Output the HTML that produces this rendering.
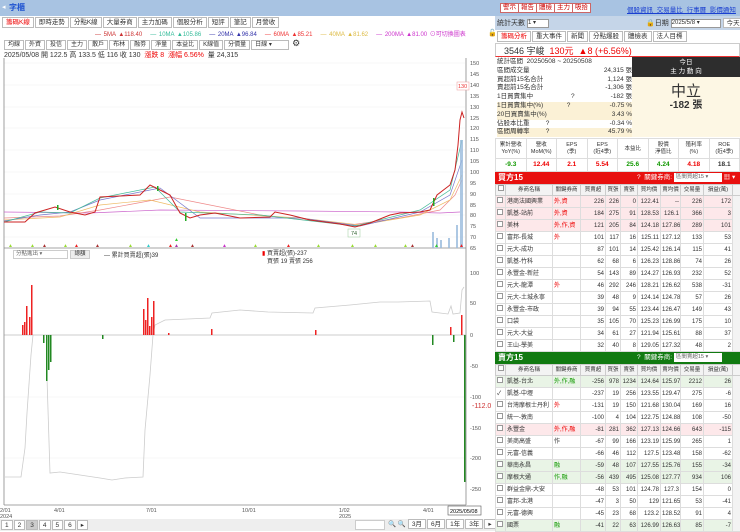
<!DOCTYPE html>
<html><head><meta charset="utf-8">
<style>
*{box-sizing:border-box;margin:0;padding:0}
body{width:740px;height:531px;overflow:hidden;background:#fff;font-family:"Liberation Sans","Noto Sans CJK TC",sans-serif;font-size:7px;color:#333;position:relative}
.abs{position:absolute}
.btn{position:absolute;top:3px;height:10px;border:1px solid #c66;background:#fff;color:#c00;font-size:6.5px;line-height:8px;padding:0 2px}
.tab{display:inline-block;border:1px solid #bbb;height:11px;line-height:9px;padding:0 3px;font-size:6.5px;margin-right:1px;background:#fff}
table{border-collapse:collapse;table-layout:fixed;font-size:6px}
td{border:1px solid #ddd;height:12px;line-height:10px;padding:0 1px;white-space:nowrap;overflow:hidden;text-align:right}
td.l{text-align:left}
th{border:1px solid #ccc;height:11px;line-height:9px;font-weight:normal;background:#f3f3f3;font-size:5.5px;white-space:nowrap;overflow:hidden}
.pk td{background:#fde8ea}
.gn td{background:#e9f4e6}
.r{color:#e00}.g{color:#190}
.cb{display:inline-block;width:6px;height:6px;border:1px solid #999;background:#fff}
</style></head><body>
<div class="abs" style="left:0;top:0;width:740px;height:16px;background:#a8c3e2"></div>
<div class="abs" style="left:2px;top:3px;font-size:7px;color:#fff">◂</div>
<div class="abs" style="left:9px;top:2px;font-size:8px;color:#1a4fd0;font-weight:bold">字櫃</div>
<div class="btn" style="left:500px">警示</div><div class="btn" style="left:518px">報告</div><div class="btn" style="left:536px">體檢</div><div class="btn" style="left:554px">主力</div><div class="btn" style="left:572px">吸拾</div>
<div class="abs" style="left:627px;top:4px;font-size:6.5px;color:#1a3fd0;text-decoration:underline;word-spacing:2px">個股資訊 交易量比 行事曆 影價通知</div>
<div class="abs" style="left:2px;top:17px"><span class="tab" style="color:#e00">籌碼K線</span><span class="tab">即時走勢</span><span class="tab">分點K線</span><span class="tab">大量券商</span><span class="tab">主力加碼</span><span class="tab">個股分析</span><span class="tab">短評</span><span class="tab">筆記</span><span class="tab">月營收</span></div>
<div class="abs" style="left:95px;top:29px;font-size:6px;white-space:nowrap;word-spacing:1px"><span style="color:#c33">— 5MA ▲118.40</span>&nbsp;&nbsp; <span style="color:#3b9">— 10MA ▲105.86</span>&nbsp;&nbsp; <span style="color:#33a">— 20MA ▲96.84</span>&nbsp;&nbsp; <span style="color:#e33">— 60MA ▲85.21</span>&nbsp;&nbsp; <span style="color:#db4">— 40MA ▲81.62</span>&nbsp;&nbsp; <span style="color:#c3c">— 200MA ▲81.00 ⊙可切換圖表</span></div>
<div class="abs" style="left:488px;top:29px;font-size:7px">🔓</div>
<div class="abs" style="left:4px;top:38px;white-space:nowrap"><span class="tab" style="height:10px;font-size:6px;line-height:8px">均線</span><span class="tab" style="height:10px;font-size:6px;line-height:8px">外資</span><span class="tab" style="height:10px;font-size:6px;line-height:8px">投信</span><span class="tab" style="height:10px;font-size:6px;line-height:8px">主力</span><span class="tab" style="height:10px;font-size:6px;line-height:8px">散戶</span><span class="tab" style="height:10px;font-size:6px;line-height:8px">布林</span><span class="tab" style="height:10px;font-size:6px;line-height:8px">融劵</span><span class="tab" style="height:10px;font-size:6px;line-height:8px">淨量</span><span class="tab" style="height:10px;font-size:6px;line-height:8px">本益比</span><span class="tab" style="height:10px;font-size:6px;line-height:8px">K線值</span><span class="tab" style="height:10px;font-size:6px;line-height:8px">分價量</span><span class="tab" style="height:10px;font-size:6px;line-height:8px;width:38px">日線 ▾</span> <span style="font-size:9px">⚙</span></div>
<div class="abs" style="left:4px;top:50px;font-size:7px;white-space:nowrap">2025/05/08 開 122.5 高 133.5 低 116 收 130 &nbsp;<span class="r">漲跌 8 &nbsp;漲幅 6.56%</span> &nbsp;量 24,315</div>
<svg class="abs" style="left:0;top:58px" width="495" height="473" viewBox="0 58 495 473">
<g stroke="#f0f0f0" stroke-width="0.6">
<line x1="4" y1="63" x2="465" y2="63"/><line x1="4" y1="85" x2="465" y2="85"/><line x1="4" y1="107" x2="465" y2="107"/><line x1="4" y1="128" x2="465" y2="128"/><line x1="4" y1="150" x2="465" y2="150"/><line x1="4" y1="172" x2="465" y2="172"/><line x1="4" y1="194" x2="465" y2="194"/><line x1="4" y1="215" x2="465" y2="215"/><line x1="4" y1="237" x2="465" y2="237"/>
<line x1="4" y1="397" x2="465" y2="397"/><line x1="4" y1="458" x2="465" y2="458"/></g>
<line x1="4" y1="58" x2="4" y2="505" stroke="#888" stroke-width="0.8"/>
<line x1="466" y1="58" x2="466" y2="505" stroke="#888" stroke-width="0.8"/>
<line x1="4" y1="248" x2="466" y2="248" stroke="#888" stroke-width="0.8"/>
<line x1="4" y1="505" x2="466" y2="505" stroke="#888" stroke-width="0.8"/>
<g font-size="5.5" fill="#555">
<text x="470" y="65">150</text><text x="470" y="76">145</text><text x="470" y="87">140</text><text x="470" y="98">135</text><text x="470" y="109">130</text><text x="470" y="120">125</text><text x="470" y="130">120</text><text x="470" y="141">115</text><text x="470" y="152">110</text><text x="470" y="163">105</text><text x="470" y="174">100</text><text x="470" y="185">95</text><text x="470" y="196">90</text><text x="470" y="207">85</text><text x="470" y="217">80</text><text x="470" y="228">75</text><text x="470" y="239">70</text><text x="470" y="250">65</text>
<text x="470" y="275">100</text><text x="470" y="305">50</text><text x="470" y="337">0</text><text x="470" y="368">-50</text><text x="470" y="399">-100</text><text x="470" y="430">-150</text><text x="470" y="460">-200</text><text x="470" y="491">-250</text>
</g>
<rect x="457" y="82" width="12" height="8" fill="#fff" stroke="#e99" stroke-width="0.5"/><text x="458" y="88" font-size="5.5" fill="#e33">130</text>
<text x="472" y="408" font-size="7" fill="#c33">-112.0</text>
<polyline fill="none" stroke="#c6c" stroke-width="0.7" points="4,212 90,213 160,210 300,211 400,212 440,213 460,212"/>
<polyline fill="none" stroke="#e88" stroke-width="0.7" points="4,218 60,216 100,210 170,197 260,215 350,225 400,218 440,210 455,195 462,180"/>
<polyline fill="none" stroke="#eb6" stroke-width="0.7" points="4,220 60,217 100,205 150,200 200,212 300,218 360,225 420,215 450,200 462,175"/>
<polyline fill="none" stroke="#77c" stroke-width="0.7" points="4,221 40,215 70,212 100,200 160,188 200,218 300,218 360,226 420,212 450,195 462,160"/>
<polyline fill="none" stroke="#4b9" stroke-width="0.7" points="4,222 40,212 70,213 100,198 155,187 180,212 260,215 355,226 420,210 450,190 462,140"/>
<polyline fill="none" stroke="#c22" stroke-width="1" points="4,222 25,222 35,213 55,207 70,212 85,215 95,212 100,197 120,196 140,195 150,185 160,190 170,195 180,213 190,218 200,215 215,213 240,218 270,217 275,212 290,215 310,220 340,224 355,227 370,223 390,215 400,213 420,212 430,210 437,195 450,185 455,170 458,145 460,120 462,112 464,118"/>
<g fill="#2a2">
<rect x="185" y="213" width="1.5" height="8"/><rect x="57" y="205" width="1.5" height="5"/><rect x="157" y="186" width="1.5" height="5"/><rect x="433" y="198" width="1.5" height="8"/>
</g>
<rect x="348" y="229" width="12" height="8" fill="#fff" stroke="#9c9" stroke-width="0.5"/><text x="351" y="235" font-size="5.5" fill="#363">74</text>
<g fill="#9bd" opacity="0.8"><rect x="432" y="232" width="2" height="16"/><rect x="436" y="238" width="2" height="10"/><rect x="440" y="240" width="2" height="8"/><rect x="448" y="238" width="2" height="10"/><rect x="460" y="140" width="3" height="108"/><rect x="456" y="225" width="2" height="23"/></g>
<g font-size="5"><text x="8" y="247" fill="#9d3">▲</text><text x="30" y="247" fill="#9d3">▲</text><text x="42" y="247" fill="#a33">▲</text><text x="63" y="247" fill="#9d3">▲</text><text x="74" y="247" fill="#e22">▲</text><text x="95" y="247" fill="#a33">▲</text><text x="128" y="247" fill="#9d3">▲</text><text x="146" y="247" fill="#3cc">▲</text><text x="168" y="247" fill="#e22">▲</text><text x="174" y="247" fill="#a3a">▲</text><text x="174" y="241" fill="#3c3">▲</text><text x="190" y="247" fill="#a33">▲</text><text x="222" y="247" fill="#c3c">▲</text><text x="253" y="247" fill="#9d3">▲</text><text x="286" y="247" fill="#e22">▲</text><text x="316" y="247" fill="#9d3">▲</text><text x="350" y="247" fill="#9d3">▲</text><text x="373" y="247" fill="#9d3">▲</text><text x="403" y="247" fill="#9d3">▲</text><text x="410" y="247" fill="#a33">▲</text><text x="434" y="247" fill="#3c3">▲</text><text x="459" y="247" fill="#e22">▲</text></g>
<line x1="4" y1="335" x2="466" y2="335" stroke="#999" stroke-width="0.6"/>
<polyline fill="none" stroke="#ccc" stroke-width="0.8" points="5,477 21,477 25,448 27,413 31,355 33,335 47,335 47,378 50,473 60,472 100,478 112,480 125,478 143,477 145,430 150,375 153,335 155,325 165,320 210,318 212,313 240,310 268,312 313,313 315,308 350,305 380,302 398,302 430,301 432,312 448,314 451,306 453,314 460,313 462,290 464,287"/>
<g fill="#e22"><rect x="22" y="325" width="1.5" height="10"/><rect x="24" y="322" width="1.5" height="13"/><rect x="26" y="306" width="1.5" height="29"/><rect x="29" y="317" width="1.5" height="18"/><rect x="31" y="285" width="1.5" height="50"/><rect x="143" y="309" width="1.5" height="26"/><rect x="145" y="320" width="1.5" height="15"/><rect x="147" y="298" width="1.5" height="37"/><rect x="149" y="326" width="1.5" height="9"/><rect x="151" y="317" width="1.5" height="18"/><rect x="153" y="301" width="1.5" height="34"/><rect x="211" y="329" width="1.5" height="6"/><rect x="315" y="330" width="1.5" height="5"/><rect x="450" y="327" width="1.5" height="8"/><rect x="461" y="315" width="1.5" height="20"/><rect x="168" y="333" width="1.5" height="2"/></g>
<g fill="#282"><rect x="43" y="335" width="1.5" height="8"/><rect x="46" y="335" width="1.5" height="46"/><rect x="48" y="335" width="1.5" height="35"/><rect x="50" y="335" width="1.5" height="27"/><rect x="102" y="335" width="1.5" height="4"/><rect x="432" y="335" width="1.5" height="10"/><rect x="453" y="335" width="1.5" height="7"/><rect x="464" y="335" width="1.5" height="147"/></g>
<g font-size="5.5" fill="#555"><text x="0" y="512">2/01</text><text x="0" y="518">2024</text><text x="54" y="512">4/01</text><text x="146" y="512">7/01</text><text x="242" y="512">10/01</text><text x="339" y="512">1/02</text><text x="339" y="518">2025</text><text x="423" y="512">4/01</text></g>
<rect x="448" y="506" width="33" height="9" fill="#fff" stroke="#555" stroke-width="0.6"/><text x="450" y="513" font-size="5.5">2025/05/08</text>
</svg>
<div class="abs" style="left:13px;top:250px;width:55px;height:9px;border:1px solid #ccc;font-size:5.5px;line-height:7px;padding-left:2px;color:#666">分點進出 ▾</div>
<div class="abs" style="left:70px;top:250px;width:20px;height:9px;border:1px solid #ccc;background:#eee;font-size:5.5px;line-height:7px;text-align:center">總額</div>
<div class="abs" style="left:104px;top:250px;font-size:6px">— 累計買賣超(張)39</div>
<div class="abs" style="left:262px;top:250px;font-size:6px;line-height:8px"><span class="r">▮</span> 買賣超(張)-237<br>&nbsp;&nbsp;&nbsp;買張 19 賣張 256</div>
<div class="abs" style="left:0;top:519px;width:495px;height:12px;background:#eee"></div>
<div class="abs" style="left:1px;top:520px;font-size:6.5px;white-space:nowrap;word-spacing:1px"><span class="tab" style="height:10px">1</span><span class="tab" style="height:10px">2</span><span class="tab" style="height:10px;background:#ccc">3</span><span class="tab" style="height:10px">4</span><span class="tab" style="height:10px">5</span><span class="tab" style="height:10px">6</span><span class="tab" style="height:10px">▸</span></div>
<div class="abs" style="left:355px;top:520px;width:30px;height:10px;border:1px solid #ccc;background:#fff"></div>
<div class="abs" style="left:388px;top:519px;font-size:6.5px;white-space:nowrap">🔍 🔍 <span class="tab" style="height:10px">3月</span><span class="tab" style="height:10px">6月</span><span class="tab" style="height:10px">1年</span><span class="tab" style="height:10px">3年</span><span class="tab" style="height:10px">▸</span><span class="tab" style="height:10px">還價</span></div>
<div class="abs" style="left:495px;top:16px;width:245px;height:14px;background:#c5d5e8"></div>
<div class="abs" style="left:497px;top:18px;font-size:7px">統計天數 <span style="display:inline-block;width:22px;height:9px;border:1px solid #999;background:#fff;font-size:6px;line-height:7px;vertical-align:middle">1 ▾</span></div>
<div class="abs" style="left:646px;top:18px;font-size:7px;white-space:nowrap">🔒日期 <span style="display:inline-block;width:50px;height:9px;border:1px solid #999;background:#fff;font-size:6px;line-height:7px;vertical-align:middle">2025/5/8 ▾</span> <span class="tab" style="height:10px">今天</span></div>
<div class="abs" style="left:497px;top:31px;white-space:nowrap"><span class="tab" style="color:#e00">籌碼分析</span><span class="tab">重大事件</span><span class="tab">新聞</span><span class="tab">分點爆股</span><span class="tab">體檢表</span><span class="tab">法人目標</span></div>
<div class="abs" style="left:495px;top:43px;width:245px;height:14px;border:1px solid #ccc;border-bottom:1.5px solid #e33"></div>
<div class="abs" style="left:504px;top:44px;font-size:9px;white-space:nowrap">3546 宇峻 &nbsp;<span class="r">130元 &nbsp;▲8 (+6.56%)</span></div>
<div class="abs" style="left:497px;top:58px;width:135px;font-size:6.5px;line-height:8.8px">
<div style="display:flex;justify-content:space-between"><span>統計區間 &nbsp;20250508 ~ 20250508</span></div>
<div style="display:flex;justify-content:space-between"><span>區間成交量</span><span>24,315 張</span></div>
<div style="display:flex;justify-content:space-between"><span>買超前15名合計</span><span>1,124 張</span></div>
<div style="display:flex;justify-content:space-between"><span>賣超前15名合計</span><span>-1,306 張</span></div>
<div style="display:flex;justify-content:space-between"><span>1日買賣集中 &nbsp;&nbsp;&nbsp;&nbsp;&nbsp;&nbsp;&nbsp;&nbsp;&nbsp;&nbsp;&nbsp;&nbsp;&nbsp;&nbsp;&nbsp;&nbsp;&nbsp;&nbsp;&nbsp;&nbsp;?</span><span>-182 張</span></div>
<div style="display:flex;justify-content:space-between;background:#fbf1d6"><span>1日買賣集中(%) &nbsp;&nbsp;&nbsp;&nbsp;&nbsp;&nbsp;&nbsp;&nbsp;&nbsp;&nbsp;&nbsp;&nbsp;?</span><span>-0.75 %</span></div>
<div style="display:flex;justify-content:space-between;background:#fbf1d6"><span>20日買賣集中(%)</span><span>3.43 %</span></div>
<div style="display:flex;justify-content:space-between"><span>佔股本比重 &nbsp;&nbsp;&nbsp;&nbsp;&nbsp;&nbsp;&nbsp;&nbsp;?</span><span>-0.34 %</span></div>
<div style="display:flex;justify-content:space-between;background:#fbf1d6"><span>區間周轉率 &nbsp;&nbsp;&nbsp;&nbsp;&nbsp;&nbsp;&nbsp;&nbsp;?</span><span>45.79 %</span></div>
</div>
<div class="abs" style="left:632px;top:57px;width:108px;height:20px;background:#2d2d2d;color:#fff;font-size:6.5px;text-align:center;line-height:9px;padding-top:1px">今日<br>主 力 動 向</div>
<div class="abs" style="left:632px;top:77px;width:108px;height:60px;background:#fdf7e4;text-align:center"><div style="font-size:15px;margin-top:6px;line-height:17px">中立</div><div style="font-size:10px;font-weight:bold;line-height:12px">-182 張</div></div>
<table class="abs" style="left:495px;top:138px;width:245px;font-size:5.5px;text-align:center">
<tr style="height:20px"><td style="text-align:center;line-height:7px">累計營收<br>YoY(%)</td><td style="text-align:center;line-height:7px">營收<br>MoM(%)</td><td style="text-align:center;line-height:7px">EPS<br>(季)</td><td style="text-align:center;line-height:7px">EPS<br>(近4季)</td><td style="text-align:center">本益比</td><td style="text-align:center;line-height:7px">股價<br>淨值比</td><td style="text-align:center;line-height:7px">殖利率<br>(%)</td><td style="text-align:center;line-height:7px">ROE<br>(近4季)</td></tr>
<tr style="font-size:6.5px;font-weight:bold;height:13px"><td style="text-align:center" class="g">-9.3</td><td style="text-align:center" class="r">12.44</td><td style="text-align:center" class="r">2.1</td><td style="text-align:center" class="r">5.54</td><td style="text-align:center" class="g">25.6</td><td style="text-align:center" class="g">4.24</td><td style="text-align:center" class="r">4.18</td><td style="text-align:center">18.1</td></tr>
</table>
<div class="abs" style="left:495px;top:172px;width:245px;height:12px;background:#e8100f;color:#fff;font-size:8px;line-height:12px;padding-left:3px;font-weight:bold">買方15<span style="position:absolute;left:142px;font-size:6.5px;font-weight:normal">? &nbsp;關鍵券商: <span style="display:inline-block;width:48px;height:9px;background:#fff;color:#666;font-size:5.5px;line-height:9px;vertical-align:middle;padding-left:2px">區間買超15 ▾</span> ▦ ▾</span></div>
<table class="abs" style="left:495px;top:184px;width:245px">
<colgroup><col style="width:10px"><col style="width:47px"><col style="width:28px"><col style="width:25px"><col style="width:15px"><col style="width:17px"><col style="width:23px"><col style="width:20px"><col style="width:23px"><col style="width:29px"><col style="width:8px"></colgroup>
<tr><th><span class="cb"></span></th><th>券商名稱</th><th>關鍵券商</th><th>買賣超</th><th>買張</th><th>賣張</th><th>買均價</th><th>賣均價</th><th>交易量</th><th>損益(萬)</th><th></th></tr>
<tr class="pk"><td class="l"><span class="cb"></span></td><td class="l">港商法國興業</td><td class="l r">外,資</td><td>226</td><td>226</td><td>0</td><td>122.41</td><td>--</td><td>226</td><td>172</td><td rowspan="13" style="background:#f3f3f3"></td></tr>
<tr class="pk"><td class="l"><span class="cb"></span></td><td class="l">凱基-站前</td><td class="l r">外,資</td><td>184</td><td>275</td><td>91</td><td>128.53</td><td>126.1</td><td>366</td><td>3</td></tr>
<tr class="pk"><td class="l"><span class="cb"></span></td><td class="l">美林</td><td class="l r">外,作,資</td><td>121</td><td>205</td><td>84</td><td>124.18</td><td>127.86</td><td>289</td><td>101</td></tr>
<tr><td class="l"><span class="cb"></span></td><td class="l">富邦-長城</td><td class="l r">外</td><td>101</td><td>117</td><td>16</td><td>125.11</td><td>127.12</td><td>133</td><td>53</td></tr>
<tr><td class="l"><span class="cb"></span></td><td class="l">元大-成功</td><td></td><td>87</td><td>101</td><td>14</td><td>125.42</td><td>126.14</td><td>115</td><td>41</td></tr>
<tr><td class="l"><span class="cb"></span></td><td class="l">凱基-竹科</td><td></td><td>62</td><td>68</td><td>6</td><td>126.23</td><td>128.86</td><td>74</td><td>26</td></tr>
<tr><td class="l"><span class="cb"></span></td><td class="l">永豐金-新莊</td><td></td><td>54</td><td>143</td><td>89</td><td>124.27</td><td>126.93</td><td>232</td><td>52</td></tr>
<tr><td class="l"><span class="cb"></span></td><td class="l">元大-龍潭</td><td class="l r">外</td><td>46</td><td>292</td><td>246</td><td>128.21</td><td>126.62</td><td>538</td><td>-31</td></tr>
<tr><td class="l"><span class="cb"></span></td><td class="l">元大-土城永寧</td><td></td><td>39</td><td>48</td><td>9</td><td>124.14</td><td>124.78</td><td>57</td><td>26</td></tr>
<tr><td class="l"><span class="cb"></span></td><td class="l">永豐金-市政</td><td></td><td>39</td><td>94</td><td>55</td><td>123.44</td><td>126.47</td><td>149</td><td>43</td></tr>
<tr><td class="l"><span class="cb"></span></td><td class="l">口袋</td><td></td><td>35</td><td>105</td><td>70</td><td>125.23</td><td>126.99</td><td>175</td><td>10</td></tr>
<tr><td class="l"><span class="cb"></span></td><td class="l">元大-大益</td><td></td><td>34</td><td>61</td><td>27</td><td>121.94</td><td>125.61</td><td>88</td><td>37</td></tr>
<tr><td class="l"><span class="cb"></span></td><td class="l">王山-學美</td><td></td><td>32</td><td>40</td><td>8</td><td>129.05</td><td>127.32</td><td>48</td><td>2</td></tr>
</table>
<div class="abs" style="left:495px;top:352px;width:245px;height:12px;background:#117a11;color:#fff;font-size:8px;line-height:12px;padding-left:3px;font-weight:bold">賣方15<span style="position:absolute;left:142px;font-size:6.5px;font-weight:normal">? &nbsp;關鍵券商: <span style="display:inline-block;width:48px;height:9px;background:#fff;color:#666;font-size:5.5px;line-height:9px;vertical-align:middle;padding-left:2px">區間賣超15 ▾</span></span></div>
<table class="abs" style="left:495px;top:364px;width:245px">
<colgroup><col style="width:10px"><col style="width:47px"><col style="width:28px"><col style="width:25px"><col style="width:15px"><col style="width:17px"><col style="width:23px"><col style="width:20px"><col style="width:23px"><col style="width:29px"><col style="width:8px"></colgroup>
<tr><th><span class="cb"></span></th><th>券商名稱</th><th>關鍵券商</th><th>買賣超</th><th>買張</th><th>賣張</th><th>買均價</th><th>賣均價</th><th>交易量</th><th>損益(萬)</th><th></th></tr>
<tr class="gn"><td class="l"><span class="cb"></span></td><td class="l">凱基-台北</td><td class="l g">外,作,融</td><td>-256</td><td>978</td><td>1234</td><td>124.64</td><td>125.97</td><td>2212</td><td>26</td><td rowspan="13" style="background:#f3f3f3"></td></tr>
<tr><td class="l">✓</td><td class="l">凱基-中壢</td><td></td><td>-237</td><td>19</td><td>256</td><td>123.55</td><td>129.47</td><td>275</td><td>-6</td></tr>
<tr><td class="l"><span class="cb"></span></td><td class="l">台灣摩根士丹利</td><td class="l r">外</td><td>-131</td><td>19</td><td>150</td><td>121.68</td><td>130.04</td><td>169</td><td>16</td></tr>
<tr><td class="l"><span class="cb"></span></td><td class="l">統一-敦南</td><td></td><td>-100</td><td>4</td><td>104</td><td>122.75</td><td>124.88</td><td>108</td><td>-50</td></tr>
<tr class="pk"><td class="l"><span class="cb"></span></td><td class="l">永豐金</td><td class="l r">外,作,融</td><td>-81</td><td>281</td><td>362</td><td>127.13</td><td>124.66</td><td>643</td><td>-115</td></tr>
<tr><td class="l"><span class="cb"></span></td><td class="l">美商高盛</td><td class="l">作</td><td>-67</td><td>99</td><td>166</td><td>123.19</td><td>125.99</td><td>265</td><td>1</td></tr>
<tr><td class="l"><span class="cb"></span></td><td class="l">元富-信義</td><td></td><td>-66</td><td>46</td><td>112</td><td>127.5</td><td>123.48</td><td>158</td><td>-62</td></tr>
<tr class="gn"><td class="l"><span class="cb"></span></td><td class="l">華南永昌</td><td class="l g">融</td><td>-59</td><td>48</td><td>107</td><td>127.55</td><td>125.76</td><td>155</td><td>-34</td></tr>
<tr class="gn"><td class="l"><span class="cb"></span></td><td class="l">摩根大通</td><td class="l g">作,融</td><td>-56</td><td>439</td><td>495</td><td>125.08</td><td>127.77</td><td>934</td><td>106</td></tr>
<tr><td class="l"><span class="cb"></span></td><td class="l">群益金鼎-大安</td><td></td><td>-48</td><td>53</td><td>101</td><td>124.78</td><td>127.3</td><td>154</td><td>0</td></tr>
<tr><td class="l"><span class="cb"></span></td><td class="l">富邦-北港</td><td></td><td>-47</td><td>3</td><td>50</td><td>129</td><td>121.65</td><td>53</td><td>-41</td></tr>
<tr><td class="l"><span class="cb"></span></td><td class="l">元富-德興</td><td></td><td>-45</td><td>23</td><td>68</td><td>123.2</td><td>128.52</td><td>91</td><td>4</td></tr>
<tr class="gn"><td class="l"><span class="cb"></span></td><td class="l">國票</td><td class="l g">融</td><td>-41</td><td>22</td><td>63</td><td>126.99</td><td>126.63</td><td>85</td><td>-7</td></tr>
</table>
</body></html>
